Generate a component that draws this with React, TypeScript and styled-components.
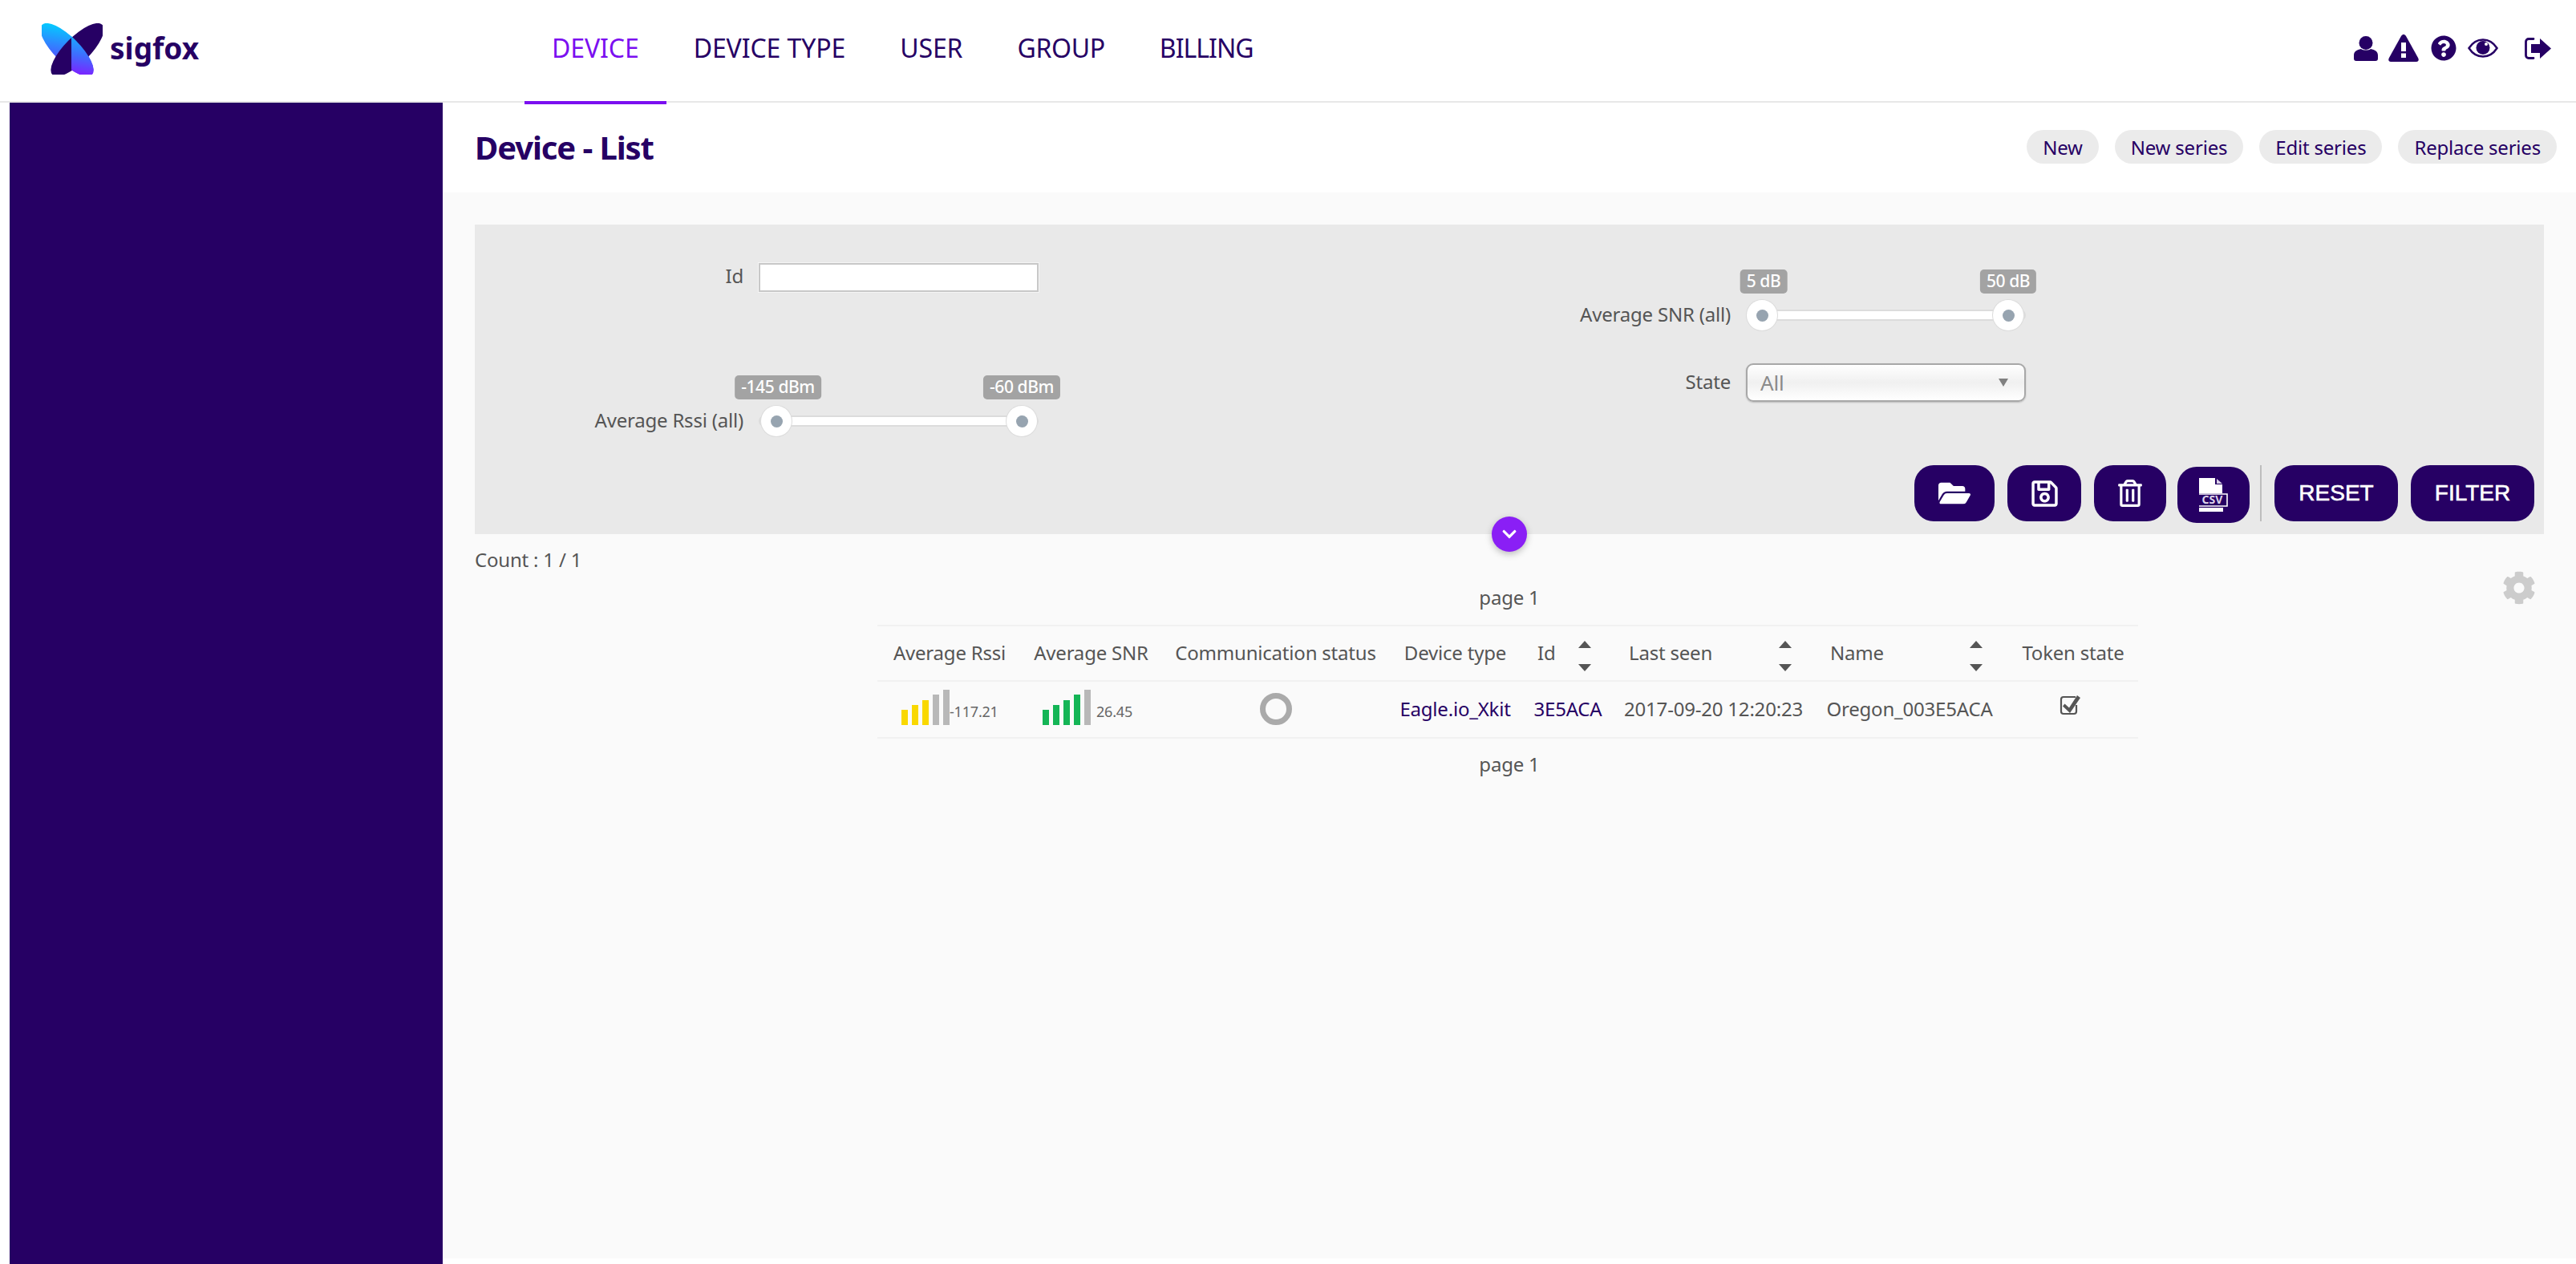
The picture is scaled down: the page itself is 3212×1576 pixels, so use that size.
import React from 'react'
import styled, { createGlobalStyle } from 'styled-components'
import { FaChevronDown, FaCog, FaFolderOpen, FaQuestionCircle, FaRegSave, FaRegTrashAlt } from 'react-icons/fa'

const navy = '#260064'
const grey = '#555555'

const GlobalStyle = createGlobalStyle`
  html, body {
    margin: 0;
    padding: 0;
    background: #fff;
  }
  body {
    font-family: "Noto Sans", "Open Sans", sans-serif;
    color: ${grey};
    letter-spacing: -0.2px;
  }
`

const Page = styled.div`
  width: 3212px;
  height: 1576px;
  display: flex;
  flex-direction: column;
  overflow: hidden;
`

const Header = styled.header`
  height: 128px;
  flex: none;
  box-sizing: border-box;
  border-bottom: 2px solid #e8e8e8;
  display: flex;
  align-items: stretch;
`

const LogoLink = styled.a`
  width: 654px;
  box-sizing: border-box;
  padding: 29px 0 0 52px;
  display: flex;
  align-items: flex-start;
  gap: 9px;
`

const LogoText = styled.span`
  font-size: 37px;
  font-weight: 700;
  line-height: 50px;
  margin-top: 6px;
  color: ${navy};
  letter-spacing: 0;
`

const Nav = styled.nav`
  display: flex;
  flex: 1;
`

const NavItem = styled.a<{ $active?: boolean; $spacing: number }>`
  position: relative;
  padding: 0 34px;
  height: 130px;
  line-height: 120px;
  font-size: 32px;
  letter-spacing: ${(p) => p.$spacing}px;
  color: ${(p) => (p.$active ? '#7b0ff0' : navy)};
  border-bottom: ${(p) => (p.$active ? '4px solid #7b0ff0' : 'none')};
  box-sizing: border-box;
`

const HeaderIcons = styled.div`
  display: flex;
  align-items: center;
  height: 120px;
  padding-right: 30px;
  color: ${navy};
  font-size: 32px;
`

const HeaderIcon = styled.span<{ $gap: number }>`
  display: flex;
  margin-left: ${(p) => p.$gap}px;
`

const Body = styled.div`
  flex: 1;
  display: flex;
  padding-left: 12px;
  min-height: 0;
`

const Sidebar = styled.aside`
  width: 540px;
  flex: none;
  background: ${navy};
`

const Main = styled.main`
  flex: 1;
  display: flex;
  flex-direction: column;
  background: #fafafa;
  margin-bottom: 7px;
`

const TitleBar = styled.div`
  height: 112px;
  flex: none;
  box-sizing: border-box;
  background: #fff;
  padding: 0 24px 2px 40px;
  display: flex;
  align-items: center;
  justify-content: space-between;
`

const Title = styled.h1`
  margin: 0;
  font-size: 40px;
  font-weight: 700;
  letter-spacing: -1.100px;
  color: ${navy};
`

const PillRow = styled.div`
  display: flex;
  gap: 20px;
`

const Pill = styled.button`
  height: 42px;
  padding: 0 20px;
  border: none;
  border-radius: 21px;
  background: #ebebeb;
  color: ${navy};
  font-family: inherit;
  letter-spacing: -0.2px;
  font-size: 24px;
`

const Content = styled.div`
  padding: 40px 40px 0;
`

const FilterPanel = styled.section`
  position: relative;
  height: 386px;
  box-sizing: border-box;
  background: #e9e9e9;
  display: flex;
  flex-direction: column;
`

const FilterColumns = styled.div`
  display: grid;
  grid-template-columns: 1290px 1fr;
  height: 264px;
`

const FilterColumn = styled.div<{ $top: number; $gap: number }>`
  padding-top: ${(p) => p.$top}px;
  display: flex;
  flex-direction: column;
  gap: ${(p) => p.$gap}px;
`

const FieldRow = styled.div<{ $label: number; $end?: boolean }>`
  display: grid;
  grid-template-columns: ${(p) => p.$label}px 349px;
  column-gap: 19px;
  align-items: ${(p) => (p.$end ? 'end' : 'center')};
`

const FieldLabel = styled.label<{ $sink?: boolean }>`
  text-align: right;
  font-size: 24px;
  line-height: 40px;
  color: ${grey};
  margin-bottom: ${(p) => (p.$sink ? '0' : '3px')};
`

const TextInput = styled.input`
  box-sizing: border-box;
  width: 349px;
  height: 36px;
  background: #fff;
  border: 2px solid #c8c8c8;
  outline: 1px solid #f5f5f5;
`

const SliderBox = styled.div`
  position: relative;
  height: 76px;
`

const SliderTrack = styled.div`
  position: absolute;
  left: 0;
  right: 0;
  top: 50px;
  height: 14px;
  box-sizing: border-box;
  background: #fff;
  border: 2px solid #dcdcdc;
  border-radius: 7px;
`

const SliderHandle = styled.div`
  position: absolute;
  top: 38px;
  width: 38px;
  height: 38px;
  margin-left: -19px;
  box-sizing: border-box;
  border-radius: 50%;
  background: #fff;
  box-shadow: 0 0 0 1px #dcdcdc;
  display: flex;
  align-items: center;
  justify-content: center;
  &::after {
    content: '';
    width: 15px;
    height: 15px;
    border-radius: 50%;
    background: #97a4b0;
  }
`

const SliderChip = styled.div`
  position: absolute;
  top: 0;
  height: 30px;
  line-height: 29px;
  padding: 0 8px;
  transform: translateX(-50%);
  border-radius: 5px;
  background: #a3a3a3;
  color: #fff;
  font-size: 21px;
  font-weight: 500;
  letter-spacing: -0.4px;
  white-space: nowrap;
`

const SelectBox = styled.div`
  box-sizing: border-box;
  width: 349px;
  height: 48px;
  border: 2px solid #a8a8a8;
  border-radius: 9px;
  background: linear-gradient(#ffffff, #f0f0f0 50%, #ffffff);
  box-shadow: 0 1px 2px rgba(0, 0, 0, 0.2);
  padding: 0 18px 0 16px;
  display: flex;
  align-items: center;
  justify-content: space-between;
  color: #8a8a8a;
  font-size: 26px;
`

const SelectArrow = styled.span`
  width: 0;
  height: 0;
  margin-right: 2px;
  border-left: 6px solid transparent;
  border-right: 6px solid transparent;
  border-top: 10px solid #808080;
`

const ActionRow = styled.div`
  margin-top: 36px;
  padding-right: 12px;
  display: flex;
  justify-content: flex-end;
  align-items: flex-start;
`

const ActionButton = styled.button<{ $w: number; $gap: number; $drop?: boolean }>`
  width: ${(p) => p.$w}px;
  height: 70px;
  margin-left: ${(p) => p.$gap}px;
  margin-top: ${(p) => (p.$drop ? '2px' : '0')};
  padding: 0;
  border: none;
  border-radius: 24px;
  background: ${navy};
  color: #fff;
  font-family: "Liberation Sans", Arial, sans-serif;
  font-size: 28px;
  letter-spacing: 0;
  -webkit-text-stroke: 0.6px #fff;
  display: flex;
  align-items: center;
  justify-content: center;
`

const ActionDivider = styled.div`
  width: 2px;
  height: 70px;
  margin-left: 13px;
  background: #bdbdbd;
`

const CollapseToggle = styled.button`
  position: absolute;
  left: 1268px;
  bottom: -22px;
  width: 44px;
  height: 44px;
  padding: 0;
  border: none;
  border-radius: 50%;
  background: #8a1ff5;
  color: #fff;
  font-size: 20px;
  box-shadow: 0 3px 8px rgba(0, 0, 0, 0.25);
  display: flex;
  align-items: center;
  justify-content: center;
`

const CountLine = styled.div`
  height: 46px;
  box-sizing: border-box;
  padding-top: 18px;
  font-size: 24px;
  line-height: 28px;
`

const PagerRow = styled.div`
  display: grid;
  grid-template-columns: 1fr auto 1fr;
  height: 42px;
`

const PagerText = styled.div`
  grid-column: 2;
  align-self: end;
  font-size: 24px;
  line-height: 24px;
  margin-bottom: -3px;
`

const SettingsIcon = styled.span`
  grid-column: 3;
  justify-self: end;
  margin-right: 10px;
  color: #cccccc;
  font-size: 42px;
  display: flex;
`

const DeviceTable = styled.div`
  width: 1572px;
  margin: 25px 0 0 502px;
`

const TableRow = styled.div<{ $h: number }>`
  display: grid;
  grid-template-columns: 180px 173px 287px 161px 120px 243px 246px 162px;
  height: ${(p) => p.$h}px;
  box-sizing: border-box;
  border-top: 2px solid #f1f1f1;
  &:last-child {
    border-bottom: 2px solid #f1f1f1;
  }
`

const HeadCell = styled.div<{ $pad?: number }>`
  position: relative;
  display: flex;
  align-items: center;
  justify-content: ${(p) => (p.$pad !== undefined ? 'flex-start' : 'center')};
  padding-left: ${(p) => p.$pad ?? 0}px;
  padding-bottom: 2px;
  font-size: 24px;
  color: ${grey};
  white-space: nowrap;
`

const SortArrows = styled.span<{ $left: number }>`
  position: absolute;
  left: ${(p) => p.$left}px;
  top: 18px;
  height: 38px;
  display: flex;
  flex-direction: column;
  justify-content: space-between;
`

const SortUp = styled.i`
  width: 0;
  height: 0;
  border-left: 8px solid transparent;
  border-right: 8px solid transparent;
  border-bottom: 9px solid #555;
`

const SortDown = styled.i`
  width: 0;
  height: 0;
  border-left: 8px solid transparent;
  border-right: 8px solid transparent;
  border-top: 9px solid #555;
`

const BodyCell = styled.div<{ $link?: boolean }>`
  display: flex;
  align-items: center;
  justify-content: center;
  padding-bottom: 2px;
  font-size: 24px;
  color: ${(p) => (p.$link ? navy : grey)};
  white-space: nowrap;
`

const SignalCell = styled.div<{ $left: number }>`
  display: flex;
  align-items: flex-end;
  padding: 0 0 15px ${(p) => p.$left}px;
`

const SignalBars = styled.div`
  display: flex;
  align-items: flex-end;
  gap: 5px;
`

const SignalBar = styled.span<{ $level: number; $color: string }>`
  width: 8px;
  height: ${(p) => 19 + p.$level * 6.25}px;
  background: ${(p) => p.$color};
`

const SignalValue = styled.span<{ $gap: number }>`
  margin-left: ${(p) => p.$gap}px;
  font-size: 18px;
  line-height: 34px;
  color: #666;
`

const StatusRing = styled.span`
  width: 40px;
  height: 40px;
  box-sizing: border-box;
  border-radius: 50%;
  border: 7px solid #aaaaaa;
`

const CheckIcon = styled.span`
  display: flex;
  margin-top: -10px;
  margin-left: -6px;
`

const BottomPager = styled.div`
  text-align: center;
  margin-top: 18px;
  font-size: 24px;
  line-height: 28px;
`

const Logo = () => (
  <svg width="76" height="64" viewBox="0 0 76 64">
    <defs>
      <linearGradient id="wing" x1="0" y1="0.3" x2="1" y2="0.8">
        <stop offset="0" stopColor="#00d0ff" />
        <stop offset="0.55" stopColor="#3f6cff" />
        <stop offset="1" stopColor="#8a12ff" />
      </linearGradient>
      <clipPath id="right-half">
        <rect x="37" y="0" width="39" height="64" />
      </clipPath>
    </defs>
    <ellipse cx="31.5" cy="33" rx="44" ry="16" transform="rotate(45 31.5 33)" fill="url(#wing)" />
    <ellipse cx="44.5" cy="33" rx="44" ry="16" transform="rotate(-45 44.5 33)" fill="#260064" />
    <g clipPath="url(#right-half)">
      <ellipse cx="31.5" cy="33" rx="44" ry="16" transform="rotate(45 31.5 33)" fill="url(#wing)" />
    </g>
  </svg>
)

const UserIcon = () => (
  <svg width="30" height="31" viewBox="0 0 30 31" fill={navy}>
    <circle cx="15" cy="8.5" r="8.500" />
    <path d="M9 16c2 2 10 2 12 0 5 1 9 3 9 8v4c0 2-1 3-3 3H3c-2 0-3-1-3-3v-4c0-5 4-7 9-8z" />
  </svg>
)

const AlertIcon = () => (
  <svg width="38" height="34" viewBox="0 0 38 34">
    <path d="M19 0c1 0 2 .5 3 2l15 27c1.500 3 .5 5-2 5H3c-2.500 0-3.500-2-2-5L16 2c1-1.500 2-2 3-2z" fill={navy} />
    <rect x="16" y="10" width="6" height="11" fill="#fff" />
    <rect x="16" y="23.500" width="6" height="5.500" fill="#fff" />
  </svg>
)

const EyeIcon = () => (
  <svg width="38" height="24" viewBox="0 0 38 24">
    <path d="M1.500 12C6 5 12 1.500 19 1.500S32 5 36.500 12C32 19 26 22.500 19 22.500S6 19 1.500 12z" fill="none" stroke={navy} strokeWidth="2.500" />
    <circle cx="19" cy="11.500" r="8.500" fill={navy} />
    <circle cx="23" cy="7" r="2" fill="#fff" />
  </svg>
)

const LogoutIcon = () => (
  <svg width="34" height="27" viewBox="0 0 34 27">
    <path d="M11 1.500H5C3 1.500 1.500 3 1.500 5v17c0 2 1.500 3.500 3.500 3.500h6" fill="none" stroke={navy} strokeWidth="2.800" strokeLinecap="round" />
    <path d="M8 8h11V1l14 12.500L19 26v-7H8z" fill={navy} />
  </svg>
)

const TokenCheckIcon = () => (
  <svg width="28" height="28" viewBox="0 0 28 28">
    <path d="M21 14v8c0 2-1 3-3 3H5c-2 0-3-1-3-3V7c0-2 1-3 3-3h15" fill="none" stroke={grey} strokeWidth="2.200" />
    <path d="M6.500 12.500l5.500 5L22 2l4 3-13 19L4 15.500z" fill={grey} />
  </svg>
)

const CsvIcon = () => (
  <svg width="36" height="42" viewBox="0 0 36 42">
    <path d="M0 0h20v8h9v11H0z" fill="#fff" />
    <path d="M22 1l7 6h-7z" fill="#d8d0e8" />
    <path d="M0 20h35v15H0" fill={navy} stroke="#fff" strokeWidth="1.600" />
    <text x="16.500" y="32" fontSize="14" fontWeight="700" textAnchor="middle" fill="#dcd4ea" fontFamily="Noto Sans, sans-serif">
      CSV
    </text>
    <path d="M0 37h30v5H0z" fill="#fff" />
  </svg>
)

const RangeSlider = ({ lo, hi, loPos, hiPos }: { lo: string; hi: string; loPos: number; hiPos: number }) => (
  <SliderBox>
    <SliderTrack />
    <SliderChip style={{ left: loPos + 2 }}>{lo}</SliderChip>
    <SliderChip style={{ left: hiPos }}>{hi}</SliderChip>
    <SliderHandle style={{ left: loPos }} />
    <SliderHandle style={{ left: hiPos }} />
  </SliderBox>
)

const Sort = ({ left }: { left: number }) => (
  <SortArrows $left={left}>
    <SortUp />
    <SortDown />
  </SortArrows>
)

const navItems = [
  { label: 'DEVICE', spacing: -0.1 },
  { label: 'DEVICE TYPE', spacing: -0.1 },
  { label: 'USER', spacing: -0.1 },
  { label: 'GROUP', spacing: -0.3 },
  { label: 'BILLING', spacing: -1 },
]
const pills = ['New', 'New series', 'Edit series', 'Replace series']

const App = () => (
  <Page>
    <GlobalStyle />
    <Header>
      <LogoLink>
        <Logo />
        <LogoText>sigfox</LogoText>
      </LogoLink>
      <Nav>
        {navItems.map((item, idx) => (
          <NavItem key={item.label} $active={idx === 0} $spacing={item.spacing}>
            {item.label}
          </NavItem>
        ))}
      </Nav>
      <HeaderIcons>
        <HeaderIcon $gap={0}>
          <UserIcon />
        </HeaderIcon>
        <HeaderIcon $gap={13}>
          <AlertIcon />
        </HeaderIcon>
        <HeaderIcon $gap={15}>
          <FaQuestionCircle />
        </HeaderIcon>
        <HeaderIcon $gap={14}>
          <EyeIcon />
        </HeaderIcon>
        <HeaderIcon $gap={33}>
          <LogoutIcon />
        </HeaderIcon>
      </HeaderIcons>
    </Header>
    <Body>
      <Sidebar />
      <Main>
        <TitleBar>
          <Title>Device - List</Title>
          <PillRow>
            {pills.map((pill) => (
              <Pill key={pill}>{pill}</Pill>
            ))}
          </PillRow>
        </TitleBar>
        <Content>
          <FilterPanel>
            <FilterColumns>
              <FilterColumn $top={44} $gap={101}>
                <FieldRow $label={335}>
                  <FieldLabel htmlFor="device-id">Id</FieldLabel>
                  <TextInput id="device-id" />
                </FieldRow>
                <FieldRow $label={335} $end>
                  <FieldLabel $sink>Average Rssi (all)</FieldLabel>
                  <RangeSlider lo="-145 dBm" hi="-60 dBm" loPos={22} hiPos={328} />
                </FieldRow>
              </FilterColumn>
              <FilterColumn $top={56} $gap={41}>
                <FieldRow $label={276} $end>
                  <FieldLabel $sink>Average SNR (all)</FieldLabel>
                  <RangeSlider lo="5 dB" hi="50 dB" loPos={20} hiPos={327} />
                </FieldRow>
                <FieldRow $label={276}>
                  <FieldLabel>State</FieldLabel>
                  <SelectBox>
                    All
                    <SelectArrow />
                  </SelectBox>
                </FieldRow>
              </FilterColumn>
            </FilterColumns>
            <ActionRow>
              <ActionButton $w={100} $gap={0}>
                <FaFolderOpen size={40} />
              </ActionButton>
              <ActionButton $w={92} $gap={16}>
                <FaRegSave size={37} />
              </ActionButton>
              <ActionButton $w={90} $gap={16}>
                <FaRegTrashAlt size={34} />
              </ActionButton>
              <ActionButton $w={90} $gap={14} $drop>
                <CsvIcon />
              </ActionButton>
              <ActionDivider />
              <ActionButton $w={154} $gap={16}>
                RESET
              </ActionButton>
              <ActionButton $w={154} $gap={16}>
                FILTER
              </ActionButton>
            </ActionRow>
            <CollapseToggle>
              <FaChevronDown />
            </CollapseToggle>
          </FilterPanel>
          <CountLine>Count : 1 / 1</CountLine>
          <PagerRow>
            <PagerText>page 1</PagerText>
            <SettingsIcon>
              <FaCog />
            </SettingsIcon>
          </PagerRow>
          <DeviceTable>
            <TableRow $h={69}>
              <HeadCell>Average Rssi</HeadCell>
              <HeadCell>Average SNR</HeadCell>
              <HeadCell>Communication status</HeadCell>
              <HeadCell>Device type</HeadCell>
              <HeadCell $pad={22}>
                Id
                <Sort left={73} />
              </HeadCell>
              <HeadCell $pad={16}>
                Last seen
                <Sort left={203} />
              </HeadCell>
              <HeadCell $pad={24}>
                Name
                <Sort left={198} />
              </HeadCell>
              <HeadCell>Token state</HeadCell>
            </TableRow>
            <TableRow $h={73}>
              <SignalCell $left={30}>
                <SignalBars>
                  {[0, 1, 2, 3, 4].map((lvl) => (
                    <SignalBar key={lvl} $level={lvl} $color={lvl < 3 ? '#f9d800' : '#b8b8b8'} />
                  ))}
                </SignalBars>
                <SignalValue $gap={0}>-117.21</SignalValue>
              </SignalCell>
              <SignalCell $left={26}>
                <SignalBars>
                  {[0, 1, 2, 3, 4].map((lvl) => (
                    <SignalBar key={lvl} $level={lvl} $color={lvl < 4 ? '#14b556' : '#b8b8b8'} />
                  ))}
                </SignalBars>
                <SignalValue $gap={7}>26.45</SignalValue>
              </SignalCell>
              <BodyCell>
                <StatusRing />
              </BodyCell>
              <BodyCell $link>Eagle.io_Xkit</BodyCell>
              <BodyCell $link>3E5ACA</BodyCell>
              <BodyCell>2017-09-20 12:20:23</BodyCell>
              <BodyCell>Oregon_003E5ACA</BodyCell>
              <BodyCell>
                <CheckIcon>
                  <TokenCheckIcon />
                </CheckIcon>
              </BodyCell>
            </TableRow>
          </DeviceTable>
          <BottomPager>page 1</BottomPager>
        </Content>
      </Main>
    </Body>
  </Page>
)

export default App
